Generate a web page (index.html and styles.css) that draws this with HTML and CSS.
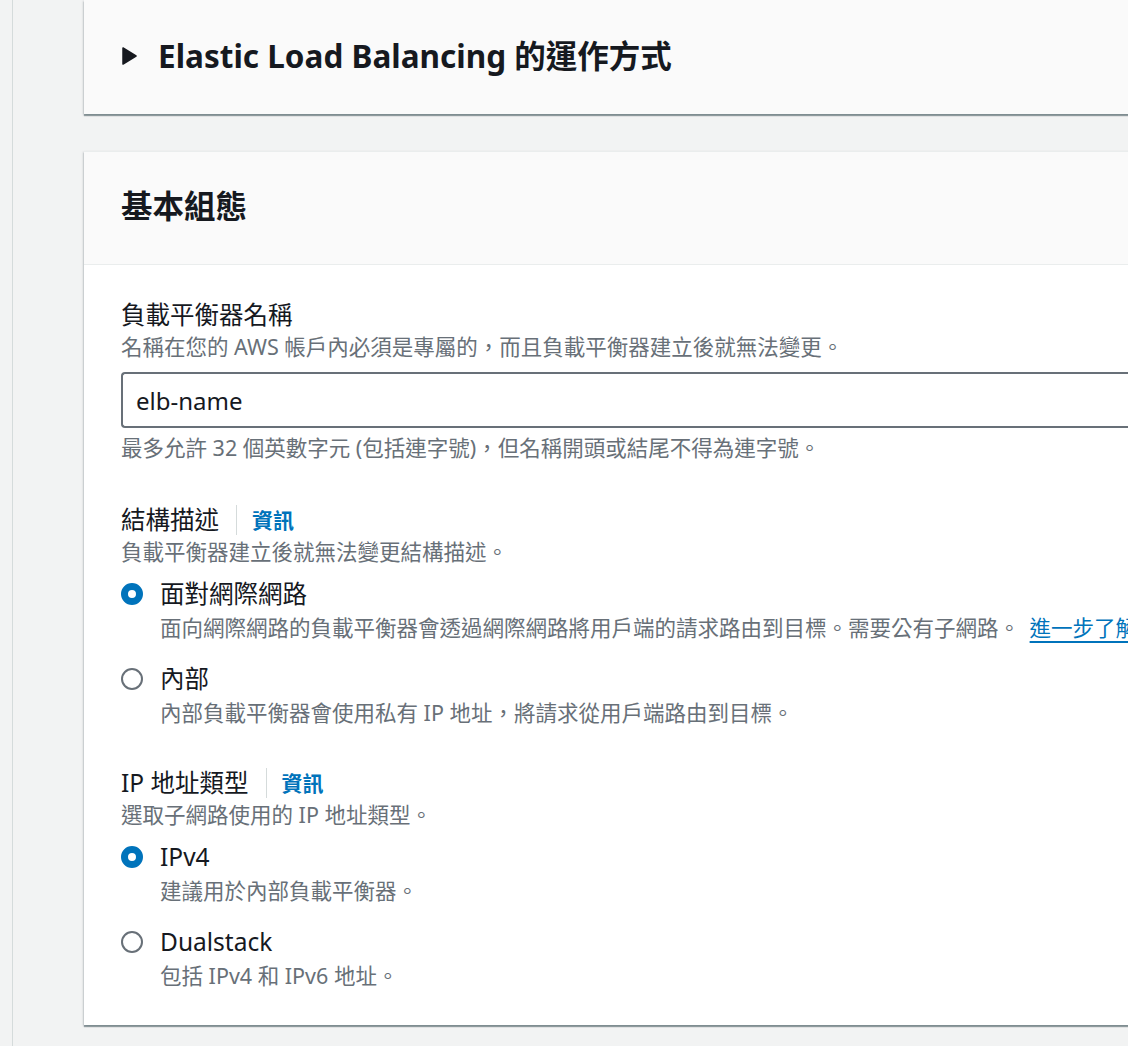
FILE: index.html
```html
<!DOCTYPE html>
<html lang="zh-Hant">
<head>
<meta charset="utf-8">
<title>建立負載平衡器</title>
<link rel="stylesheet" href="styles.css">
</head>
<body>
<div class="layout">
  <div class="sidebar"></div>
  <main class="main">
    <section class="card card-collapsed">
      <div class="card-header">
        <h2 class="card-title expandable">
          <svg class="caret" width="15" height="18" viewBox="0 0 15 18" aria-hidden="true"><path d="M1 1 L14 9 L1 17 Z" fill="#16191f" stroke="#16191f" stroke-width="1.5" stroke-linejoin="round"/></svg>
          <span>Elastic Load Balancing 的運作方式</span>
        </h2>
      </div>
    </section>

    <section class="card">
      <div class="card-header bordered">
        <h2 class="card-title">基本組態</h2>
      </div>
      <div class="card-body">
        <div class="field">
          <div class="label">負載平衡器名稱</div>
          <div class="desc">名稱在您的 AWS 帳戶內必須是專屬的，而且負載平衡器建立後就無法變更。</div>
          <div class="input">elb-name</div>
          <div class="desc constraint">最多允許 32 個英數字元 (包括連字號)，但名稱開頭或結尾不得為連字號。</div>
        </div>

        <div class="field">
          <div class="label-row"><span class="label">結構描述</span><a class="info">資訊</a></div>
          <div class="desc">負載平衡器建立後就無法變更結構描述。</div>
          <div class="radio-group">
            <div class="radio-item">
              <span class="radio checked"></span>
              <div class="radio-text">
                <div class="radio-label">面對網際網路</div>
                <div class="radio-desc">面向網際網路的負載平衡器會透過網際網路將用戶端的請求路由到目標。需要公有子網路。 <a class="link">進一步了解</a></div>
              </div>
            </div>
            <div class="radio-item">
              <span class="radio"></span>
              <div class="radio-text">
                <div class="radio-label">內部</div>
                <div class="radio-desc">內部負載平衡器會使用私有 IP 地址，將請求從用戶端路由到目標。</div>
              </div>
            </div>
          </div>
        </div>

        <div class="field">
          <div class="label-row"><span class="label">IP 地址類型</span><a class="info">資訊</a></div>
          <div class="desc">選取子網路使用的 IP 地址類型。</div>
          <div class="radio-group">
            <div class="radio-item">
              <span class="radio checked"></span>
              <div class="radio-text">
                <div class="radio-label">IPv4</div>
                <div class="radio-desc">建議用於內部負載平衡器。</div>
              </div>
            </div>
            <div class="radio-item">
              <span class="radio"></span>
              <div class="radio-text">
                <div class="radio-label">Dualstack</div>
                <div class="radio-desc">包括 IPv4 和 IPv6 地址。</div>
              </div>
            </div>
          </div>
        </div>
      </div>
    </section>
  </main>
</div>
</body>
</html>
```

FILE: styles.css
```css
html, body {
  margin: 0;
  padding: 0;
  overflow: hidden;
}
body {
  background: #f2f3f3;
  font-family: "Noto Sans", "Noto Sans CJK TC", sans-serif;
  color: #16191f;
  width: 1128px;
  height: 1046px;
}
.layout {
  display: flex;
  width: 1300px;
  min-height: 1046px;
}
.sidebar {
  width: 12px;
  flex: none;
  border-right: 1px solid #d5dbdb;
}
.main {
  flex: 1;
  padding-left: 71px;
  display: flex;
  flex-direction: column;
  gap: 37px;
}
.card {
  background: #ffffff;
  box-shadow: 0 2px 1px 0 rgba(0, 28, 36, 0.35), 1px 1px 2px 0 rgba(0, 28, 36, 0.15), -1px 1px 2px 0 rgba(0, 28, 36, 0.15);
  border-top: 1px solid #eaeded;
}
.card-collapsed {
  border-top: none;
}
.card-header {
  background: #fafafa;
  padding: 36px 37px 38px;
}
.card-header.bordered {
  padding: 34px 37px 38px;
  border-bottom: 1px solid #eaeded;
}
.card-title {
  margin: 0;
  font-size: 31.5px;
  line-height: 40px;
  font-weight: 700;
  display: flex;
  align-items: center;
}
.expandable {
  padding-left: 1px;
}
.caret {
  margin-right: 21px;
  flex: none;
}
.card-body {
  padding: 34px 37px 32px;
  display: flex;
  flex-direction: column;
  gap: 37px;
}
.label {
  font-size: 24.5px;
  line-height: 32px;
}
.label-row {
  display: flex;
  align-items: center;
  height: 32px;
}
.info {
  font-size: 21px;
  font-weight: 700;
  color: #0073bb;
  border-left: 1px solid #d5dbdb;
  margin-left: 17px;
  padding-left: 15px;
  line-height: 30px;
}
.desc {
  font-size: 21.5px;
  line-height: 32px;
  color: #687078;
}
.constraint {
  margin-top: 4px;
  padding-bottom: 3px;
}
.input {
  margin-top: 9px;
  height: 52px;
  border: 2px solid #687078;
  border-right: none;
  border-radius: 4px 0 0 4px;
  padding: 0 13px;
  font-size: 24px;
  line-height: 54px;
  background: #fff;
}
.radio-group {
  margin-top: 9px;
  display: flex;
  flex-direction: column;
  gap: 17px;
}
.radio-item {
  display: flex;
  align-items: flex-start;
}
.radio {
  flex: none;
  width: 22px;
  height: 22px;
  box-sizing: border-box;
  border-radius: 50%;
  border: 2px solid #687078;
  margin-top: 6px;
  margin-right: 17px;
}
.radio.checked {
  border: 7px solid #0073bb;
}
.radio-label {
  font-size: 24.5px;
  line-height: 34px;
}
.radio-desc {
  font-size: 21.5px;
  line-height: 34px;
  color: #687078;
  white-space: nowrap;
}
.link {
  color: #0073bb;
  text-decoration: underline;
  text-decoration-thickness: 2px;
  text-underline-offset: 5px;
  margin-left: 4px;
}
```
